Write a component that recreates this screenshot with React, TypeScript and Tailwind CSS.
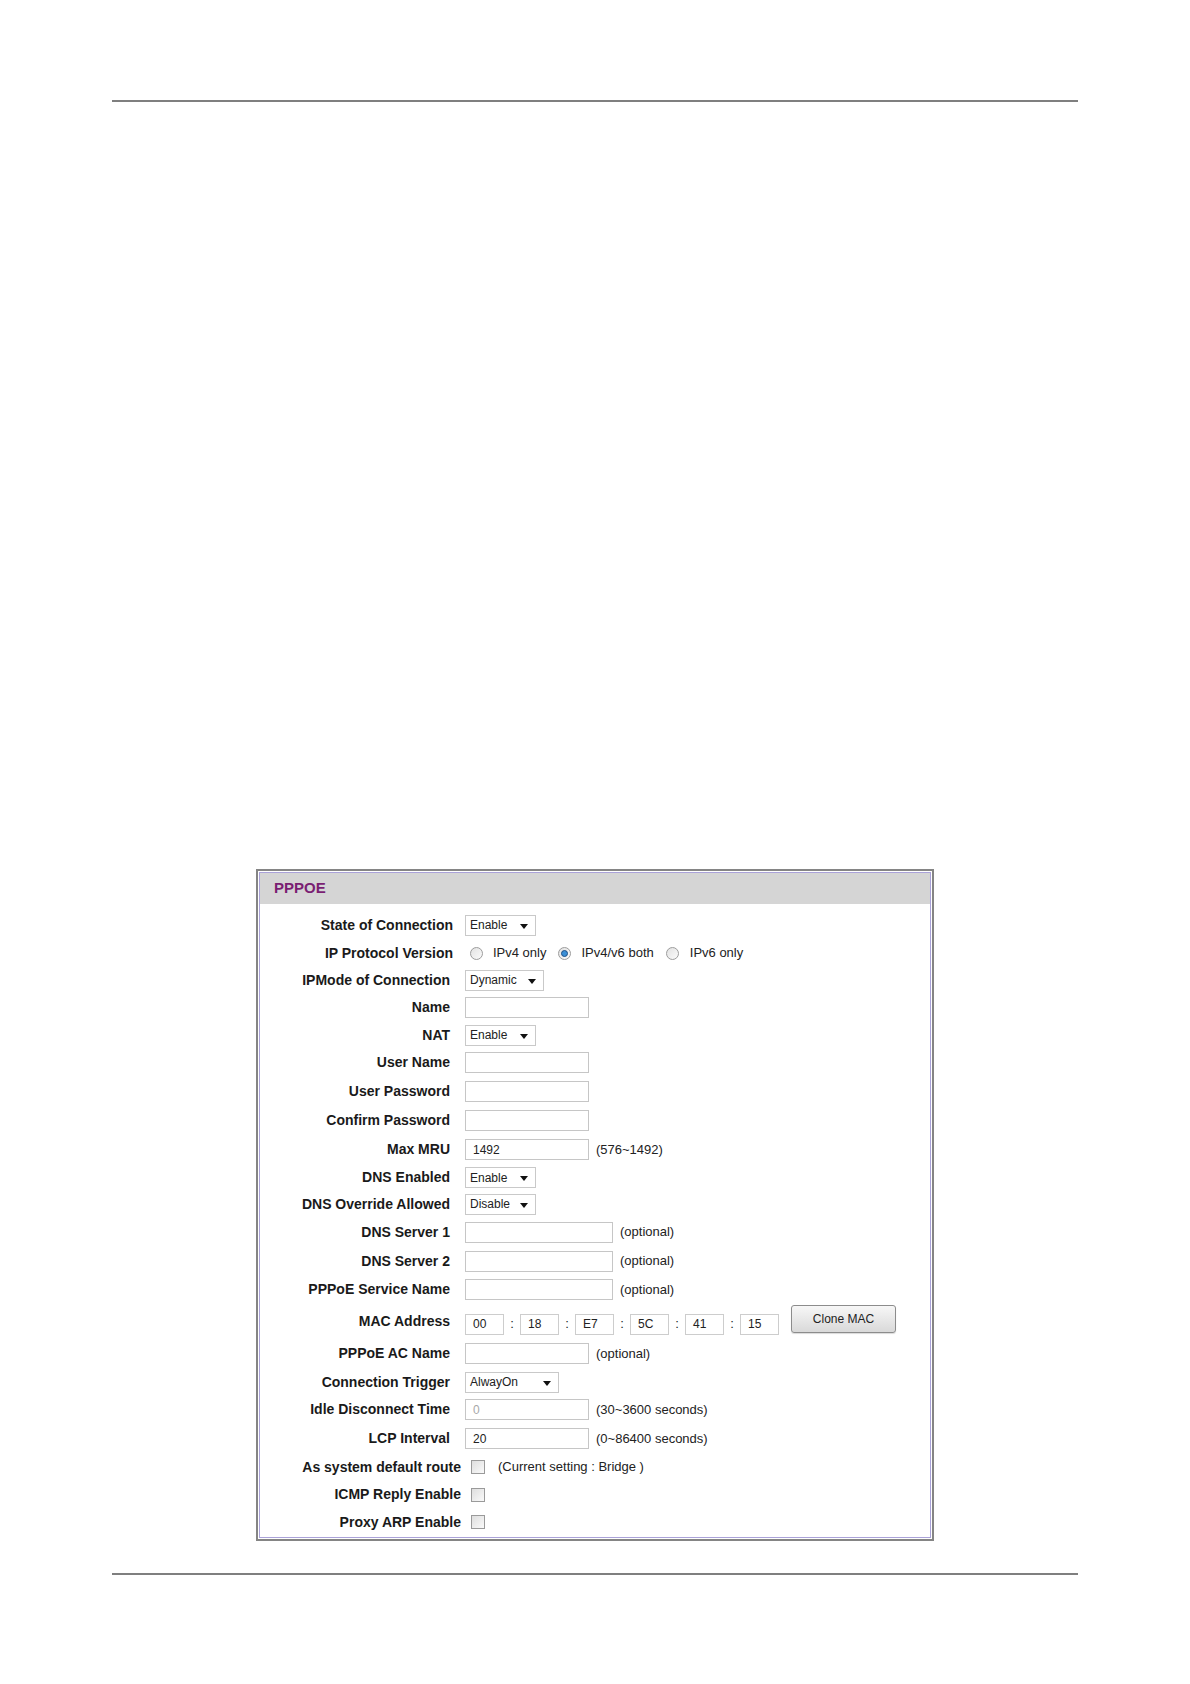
import type { ReactNode } from "react";

type Row = {
  label: string;
  height: number;
  labelWidth?: number;
  gap?: number;
  control: ReactNode;
};

function Select({ value, width }: { value: string; width: number }) {
  return (
    <div
      className="relative flex h-[21px] items-center border border-[#c9c9c9] bg-white pl-[4px] text-[12px] text-[#222]"
      style={{ width }}
    >
      <span>{value}</span>
      <span className="absolute right-[7px] top-[8px] h-0 w-0 border-x-[4px] border-t-[5px] border-x-transparent border-t-[#111]" />
    </div>
  );
}

function TextBox({ width, value, muted }: { width: number; value?: string; muted?: boolean }) {
  return (
    <div
      className={`flex h-[21px] items-center border border-[#c6c6c6] bg-white pl-[7px] text-[12px] ${
        muted ? "text-[#a8a8a8]" : "text-[#222]"
      }`}
      style={{ width }}
    >
      {value}
    </div>
  );
}

function Note({ children, gap = 7 }: { children: ReactNode; gap?: number }) {
  return (
    <span className="text-[13px] text-[#222]" style={{ marginLeft: gap }}>
      {children}
    </span>
  );
}

function Radio({ checked }: { checked?: boolean }) {
  return (
    <span className="flex h-[13px] w-[13px] items-center justify-center rounded-full border border-[#9c9c9c] bg-linear-to-br from-[#e2e2e2] to-[#fbfbfb]">
      {checked ? (
        <span className="h-[7px] w-[7px] rounded-full border border-[#1d4f86] bg-[#3a8fd6]" />
      ) : null}
    </span>
  );
}

function Checkbox() {
  return (
    <span className="block h-[14px] w-[14px] border border-[#9a9a9a] bg-linear-to-br from-[#dedede] to-[#fafafa]" />
  );
}

function MacBox({ value }: { value: string }) {
  return (
    <div className="flex h-[21px] w-[39px] items-center border border-[#cdcdcd] bg-white pl-[7px] text-[12px] text-[#222]">
      {value}
    </div>
  );
}

function MacAddress() {
  const parts = ["00", "18", "E7", "5C", "41", "15"];
  return (
    <div className="flex items-center">
      <div className="mt-[6px] flex items-center">
        {parts.map((part, index) => (
          <div key={part} className="flex items-center">
            {index > 0 ? (
              <span className="w-[16px] text-center text-[13px] text-[#222]">:</span>
            ) : null}
            <MacBox value={part} />
          </div>
        ))}
      </div>
      <button
        type="button"
        className="ml-[12px] -mt-[4px] flex h-[28px] w-[105px] items-center justify-center rounded-[3px] border border-[#8c8c8c] bg-linear-to-b from-[#f7f7f7] to-[#d9d9d9] text-[12px] text-[#222] shadow-[0_1px_1px_rgba(0,0,0,0.15)]"
      >
        Clone MAC
      </button>
    </div>
  );
}

const rows: Row[] = [
  { label: "State of Connection", height: 28, labelWidth: 193, gap: 12, control: <Select value="Enable" width={71} /> },
  {
    label: "IP Protocol Version",
    height: 28,
    labelWidth: 193,
    gap: 12,
    control: (
      <div className="flex items-center text-[13px] text-[#222]">
        <span className="ml-[5px]">
          <Radio />
        </span>
        <span className="ml-[10px]">IPv4 only</span>
        <span className="ml-[12px]">
          <Radio checked />
        </span>
        <span className="ml-[10px]">IPv4/v6 both</span>
        <span className="ml-[12px]">
          <Radio />
        </span>
        <span className="ml-[11px]">IPv6 only</span>
      </div>
    ),
  },
  { label: "IPMode of Connection", height: 26, control: <Select value="Dynamic" width={79} /> },
  { label: "Name", height: 29, control: <TextBox width={124} /> },
  { label: "NAT", height: 26, control: <Select value="Enable" width={71} /> },
  { label: "User Name", height: 29, control: <TextBox width={124} /> },
  { label: "User Password", height: 29, control: <TextBox width={124} /> },
  { label: "Confirm Password", height: 29, control: <TextBox width={124} /> },
  {
    label: "Max MRU",
    height: 29,
    control: (
      <div className="flex items-center">
        <TextBox width={124} value="1492" />
        <Note>(576~1492)</Note>
      </div>
    ),
  },
  { label: "DNS Enabled", height: 27, control: <Select value="Enable" width={71} /> },
  { label: "DNS Override Allowed", height: 26, control: <Select value="Disable" width={71} /> },
  {
    label: "DNS Server 1",
    height: 30,
    control: (
      <div className="flex items-center">
        <TextBox width={148} />
        <Note>(optional)</Note>
      </div>
    ),
  },
  {
    label: "DNS Server 2",
    height: 28,
    control: (
      <div className="flex items-center">
        <TextBox width={148} />
        <Note>(optional)</Note>
      </div>
    ),
  },
  {
    label: "PPPoE Service Name",
    height: 29,
    control: (
      <div className="flex items-center">
        <TextBox width={148} />
        <Note>(optional)</Note>
      </div>
    ),
  },
  { label: "MAC Address", height: 34, control: <MacAddress /> },
  {
    label: "PPPoE AC Name",
    height: 31,
    control: (
      <div className="flex items-center">
        <TextBox width={124} />
        <Note>(optional)</Note>
      </div>
    ),
  },
  { label: "Connection Trigger", height: 26, control: <Select value="AlwayOn" width={94} /> },
  {
    label: "Idle Disconnect Time",
    height: 29,
    control: (
      <div className="flex items-center">
        <TextBox width={124} value="0" muted />
        <Note>(30~3600 seconds)</Note>
      </div>
    ),
  },
  {
    label: "LCP Interval",
    height: 29,
    control: (
      <div className="flex items-center">
        <TextBox width={124} value="20" />
        <Note>(0~86400 seconds)</Note>
      </div>
    ),
  },
  {
    label: "As system default route",
    height: 28,
    labelWidth: 201,
    gap: 10,
    control: (
      <div className="flex items-center">
        <Checkbox />
        <Note gap={13}>(Current setting : Bridge )</Note>
      </div>
    ),
  },
  { label: "ICMP Reply Enable", height: 27, labelWidth: 201, gap: 10, control: <Checkbox /> },
  { label: "Proxy ARP Enable", height: 28, labelWidth: 201, gap: 10, control: <Checkbox /> },
];

export default function App() {
  return (
    <div
      className="min-h-[1684px] w-[1190px] bg-white pt-[100px]"
      style={{ fontFamily: '"Liberation Sans", Arial, sans-serif' }}
    >
      <div className="mx-[112px] h-[2px] bg-[#7f7f7f]" />

      <div className="ml-[256px] mt-[767px] w-[678px] border-[2px] border-[#858585] bg-white p-px">
        <div className="border border-[#aaa2d8]">
          <div className="flex h-[31px] items-center bg-[#d5d5d5] pl-[14px] text-[15px] font-bold text-[#7a1f73]">
            PPPOE
          </div>
          <div className="pt-[7px] pb-px">
            {rows.map((row) => (
              <div key={row.label} className="flex items-center" style={{ height: row.height }}>
                <div
                  className="shrink-0 text-right text-[14px] font-bold text-[#1a1a1a]"
                  style={{ width: row.labelWidth ?? 190 }}
                >
                  {row.label}
                </div>
                <div style={{ marginLeft: row.gap ?? 15 }}>{row.control}</div>
              </div>
            ))}
          </div>
        </div>
      </div>

      <div className="mx-[112px] mt-[32px] h-[2px] bg-[#7f7f7f]" />
    </div>
  );
}
